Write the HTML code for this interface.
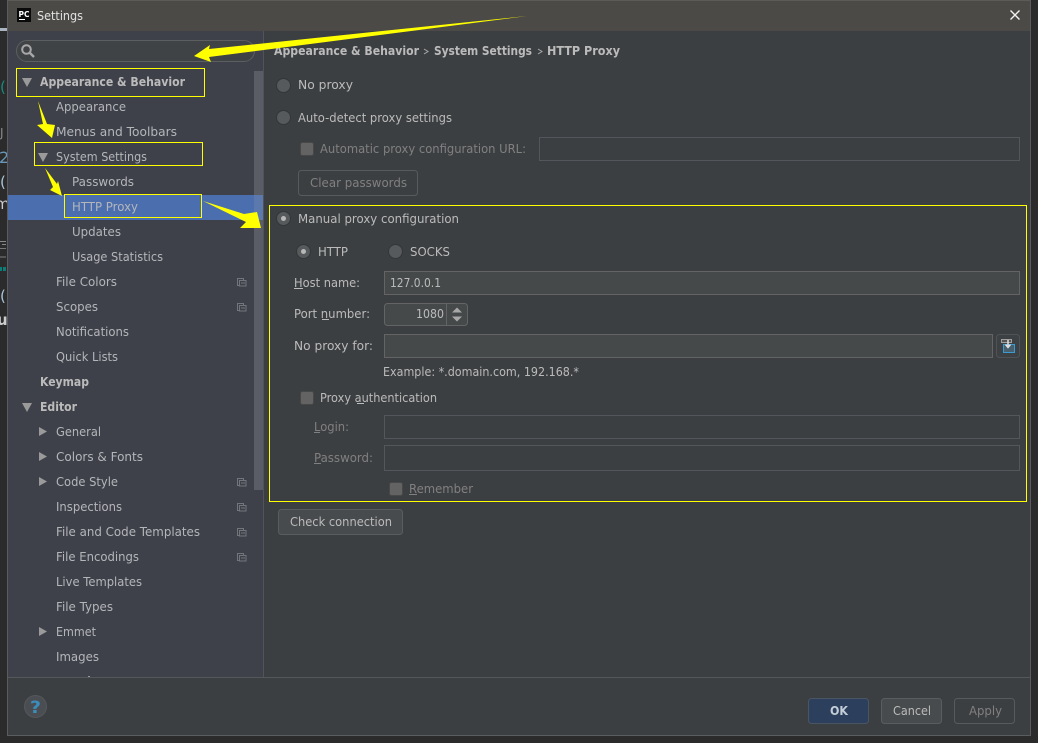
<!DOCTYPE html>
<html><head><meta charset="utf-8"><title>Settings</title>
<style>
html,body{margin:0;padding:0;background:#2b2b2b;width:1038px;height:743px;overflow:hidden}
svg{display:block}
text{font-family:"DejaVu Sans","Liberation Sans",sans-serif;font-size:12px;fill:#bbb}
.s{fill:#b4b6ba}
.b{font-weight:bold;fill:#bbb}
.d{fill:#808080}
.f{fill:#45494a;stroke:#646464}
.g{fill:#3c3f41;stroke:#53565a}
.c{fill:#636363;stroke:#484848}
.r{fill:#575a5c;stroke:#333538}
.y{fill:none;stroke:#ffff00}
.a{fill:#ffff00}
.t{fill:#9a9a9a}
.u{fill:#a8a8a8}
.i{fill:none;stroke:#72757b}
</style></head><body>
<svg width="1038" height="743" viewBox="0 0 1038 743" xmlns="http://www.w3.org/2000/svg">
<rect width="1038" height="743" fill="#2b2b2b"/>
<rect x="0" y="28" width="7" height="3" fill="#aab4c0"/>
<text x="0" y="92" style="font-size:15px;fill:#178a80">(</text>
<text x="0" y="137" style="font-size:12px;fill:#8a8a8a">J</text>
<text x="-1" y="163" style="font-size:16px;fill:#6897bb">2</text>
<text x="0" y="187" style="font-size:15px;fill:#a9c4dc">(</text>
<text x="-5" y="209" style="font-size:15px;fill:#ccc">m</text>
<rect x="0" y="241" width="6" height="1" fill="#888"/><rect x="2" y="244" width="4" height="1" fill="#888"/><rect x="0" y="248" width="6" height="1" fill="#777"/>
<rect x="0" y="256" width="6" height="2" fill="#555"/>
<rect x="0" y="267" width="2" height="4" fill="#0e7d78"/><rect x="3" y="267" width="3" height="4" fill="#0e7d78"/>
<text x="0" y="301" style="font-size:15px;fill:#a9c4dc">(</text>
<text x="-3" y="325" style="font-size:15px;font-weight:bold;fill:#ccc">u</text>

<!-- window -->
<rect x="7" y="0" width="1024" height="736" fill="#5a5c5e"/>
<rect x="8" y="1" width="1022" height="734" fill="#3c3f41"/>
<rect x="8" y="1" width="1022" height="30" fill="#4c4a46"/>
<rect x="8" y="0" width="1022" height="1" fill="#5c5b58"/>
<rect x="17" y="8" width="14" height="14" fill="#0a0a0a"/>
<text x="18.500" y="17" textLength="11" lengthAdjust="spacingAndGlyphs" style="font-size:7.500px;font-weight:bold;fill:#fff">PC</text>
<rect x="19" y="19" width="6" height="1" fill="#fff"/>
<text x="37" y="20" textLength="46" lengthAdjust="spacingAndGlyphs" style="fill:#e2e2e2">Settings</text>
<path d="M1010.500 10.500L1019.500 19.500M1019.500 10.500L1010.500 19.500" stroke="#f2f2f2" stroke-width="1.400" fill="none"/>

<!-- sidebar -->
<rect x="8" y="31" width="255" height="646" fill="#3e4149"/>
<rect x="263" y="31" width="1" height="646" fill="#515457"/>
<rect x="8" y="195" width="246" height="25" fill="#4b6eaf"/>
<rect x="254" y="71" width="9" height="419" fill="#5a5d65"/>
<rect x="254" y="195" width="9" height="25" fill="#5c79ad"/>
<rect x="16.500" y="40.500" width="238" height="21" rx="10.500" fill="#404346" stroke="#5c5e60"/>
<circle cx="26.500" cy="49.500" r="4.300" fill="none" stroke="#a8a8a8" stroke-width="2"/>
<path d="M30 53L34 57" stroke="#a8a8a8" stroke-width="2.400"/>

<path class="t" d="M22 78h10l-5 9z"/>
<text class="b" x="40" y="86" textLength="145" lengthAdjust="spacingAndGlyphs">Appearance &amp; Behavior</text>
<text class="s" x="56" y="111" textLength="70" lengthAdjust="spacingAndGlyphs">Appearance</text>
<text class="s" x="56" y="136" textLength="121" lengthAdjust="spacingAndGlyphs">Menus and Toolbars</text>
<path class="t" d="M38 153h10l-5 9z"/>
<text class="s" x="56" y="161" textLength="91" lengthAdjust="spacingAndGlyphs">System Settings</text>
<text class="s" x="72" y="186" textLength="62" lengthAdjust="spacingAndGlyphs">Passwords</text>
<text class="s" x="72" y="211" textLength="66" lengthAdjust="spacingAndGlyphs">HTTP Proxy</text>
<text class="s" x="72" y="236" textLength="49" lengthAdjust="spacingAndGlyphs">Updates</text>
<text class="s" x="72" y="261" textLength="91" lengthAdjust="spacingAndGlyphs">Usage Statistics</text>
<text class="s" x="56" y="286" textLength="61" lengthAdjust="spacingAndGlyphs">File Colors</text>
<text class="s" x="56" y="311" textLength="42" lengthAdjust="spacingAndGlyphs">Scopes</text>
<text class="s" x="56" y="336" textLength="73" lengthAdjust="spacingAndGlyphs">Notifications</text>
<text class="s" x="56" y="361" textLength="62" lengthAdjust="spacingAndGlyphs">Quick Lists</text>
<text class="b" x="40" y="386" textLength="49" lengthAdjust="spacingAndGlyphs">Keymap</text>
<path class="t" d="M22 403h10l-5 9z"/>
<text class="b" x="40" y="411" textLength="37" lengthAdjust="spacingAndGlyphs">Editor</text>
<path class="t" d="M39 427v9l8-4.500z"/>
<text class="s" x="56" y="436" textLength="45" lengthAdjust="spacingAndGlyphs">General</text>
<path class="t" d="M39 452v9l8-4.500z"/>
<text class="s" x="56" y="461" textLength="87" lengthAdjust="spacingAndGlyphs">Colors &amp; Fonts</text>
<path class="t" d="M39 477v9l8-4.500z"/>
<text class="s" x="56" y="486" textLength="62" lengthAdjust="spacingAndGlyphs">Code Style</text>
<text class="s" x="56" y="511" textLength="66" lengthAdjust="spacingAndGlyphs">Inspections</text>
<text class="s" x="56" y="536" textLength="144" lengthAdjust="spacingAndGlyphs">File and Code Templates</text>
<text class="s" x="56" y="561" textLength="83" lengthAdjust="spacingAndGlyphs">File Encodings</text>
<text class="s" x="56" y="586" textLength="86" lengthAdjust="spacingAndGlyphs">Live Templates</text>
<text class="s" x="56" y="611" textLength="57" lengthAdjust="spacingAndGlyphs">File Types</text>
<path class="t" d="M39 627v9l8-4.500z"/>
<text class="s" x="56" y="636" textLength="40" lengthAdjust="spacingAndGlyphs">Emmet</text>
<text class="s" x="56" y="661" textLength="43" lengthAdjust="spacingAndGlyphs">Images</text>
<rect x="88" y="676" width="2" height="1" fill="#9a9a9a"/>

<!-- copy icons -->
<g class="i"><path d="M240.500 285.500h-3v-7h6v2"/><rect x="239.500" y="280.500" width="6.500" height="5.500" fill="#3e4149"/><path d="M241 283h4"/></g>
<g class="i"><path d="M240.500 310.500h-3v-7h6v2"/><rect x="239.500" y="305.500" width="6.500" height="5.500" fill="#3e4149"/><path d="M241 308h4"/></g>
<g class="i"><path d="M240.500 485.500h-3v-7h6v2"/><rect x="239.500" y="480.500" width="6.500" height="5.500" fill="#3e4149"/><path d="M241 483h4"/></g>
<g class="i"><path d="M240.500 510.500h-3v-7h6v2"/><rect x="239.500" y="505.500" width="6.500" height="5.500" fill="#3e4149"/><path d="M241 508h4"/></g>
<g class="i"><path d="M240.500 535.500h-3v-7h6v2"/><rect x="239.500" y="530.500" width="6.500" height="5.500" fill="#3e4149"/><path d="M241 533h4"/></g>
<g class="i"><path d="M240.500 560.500h-3v-7h6v2"/><rect x="239.500" y="555.500" width="6.500" height="5.500" fill="#3e4149"/><path d="M241 558h4"/></g>

<!-- footer -->
<rect x="8" y="677" width="1022" height="1" fill="#55585a"/>
<circle cx="35.500" cy="706.500" r="11" fill="#4a4e52" stroke="#54585c"/>
<text x="30" y="713" textLength="11" lengthAdjust="spacingAndGlyphs" style="font-size:17px;font-weight:bold;fill:#3c8dbc">?</text>
<rect x="808.500" y="698.500" width="60" height="25" rx="3" fill="#2c405e" stroke="#4a5563"/>
<text x="830" y="715" textLength="18" lengthAdjust="spacingAndGlyphs" style="font-weight:bold;fill:#c5ced8">OK</text>
<rect x="881.500" y="698.500" width="60" height="25" rx="3" fill="#484b4d" stroke="#5a5d5f"/>
<text x="893" y="715" textLength="38" lengthAdjust="spacingAndGlyphs">Cancel</text>
<rect x="954.500" y="698.500" width="60" height="25" rx="3" fill="#3c3f41" stroke="#585b5d"/>
<text class="d" x="969" y="715" textLength="33" lengthAdjust="spacingAndGlyphs">Apply</text>

<!-- breadcrumb -->
<text class="b" x="274" y="55" textLength="145" lengthAdjust="spacingAndGlyphs">Appearance &amp; Behavior</text>
<path d="M424 49l4 2.500-4 2.500" fill="none" stroke="#aaa"/>
<text class="b" x="434" y="55" textLength="98" lengthAdjust="spacingAndGlyphs">System Settings</text>
<path d="M538 49l4 2.500-4 2.500" fill="none" stroke="#aaa"/>
<text class="b" x="547" y="55" textLength="73" lengthAdjust="spacingAndGlyphs">HTTP Proxy</text>

<!-- radios -->
<circle class="r" cx="283.500" cy="85.500" r="7"/>
<text x="298" y="89" textLength="55" lengthAdjust="spacingAndGlyphs">No proxy</text>
<circle class="r" cx="283.500" cy="117.500" r="7"/>
<text x="298" y="122" textLength="154" lengthAdjust="spacingAndGlyphs">Auto-detect proxy settings</text>
<rect class="c" x="300.500" y="142.500" width="13" height="13" rx="2"/>
<text class="d" x="320" y="153" textLength="206" lengthAdjust="spacingAndGlyphs">Automatic proxy configuration URL:</text>
<rect class="g" x="539.500" y="137.500" width="480" height="23"/>
<rect x="298.500" y="170.500" width="119" height="25" rx="3" fill="#3c3f41" stroke="#585b5d"/>
<text class="d" x="310" y="187" textLength="97" lengthAdjust="spacingAndGlyphs">Clear passwords</text>

<rect class="y" x="269.500" y="205.500" width="757" height="296"/>
<circle class="r" cx="283.500" cy="218.500" r="7"/><circle cx="283.500" cy="218.500" r="2.500" fill="#b8b8b8"/>
<text x="298" y="223" textLength="161" lengthAdjust="spacingAndGlyphs">Manual proxy configuration</text>
<circle class="r" cx="303.500" cy="251.500" r="7"/><circle cx="303.500" cy="251.500" r="2.500" fill="#b8b8b8"/>
<text x="318" y="256" textLength="30" lengthAdjust="spacingAndGlyphs">HTTP</text>
<circle class="r" cx="395.500" cy="251.500" r="7"/>
<text x="410" y="256" textLength="40" lengthAdjust="spacingAndGlyphs">SOCKS</text>

<text x="294" y="287" textLength="66" lengthAdjust="spacingAndGlyphs">Host name:</text>
<rect x="294" y="288" width="9" height="1" fill="#bbb"/>
<rect class="f" x="384.500" y="271.500" width="635" height="23"/>
<text x="390" y="287" textLength="51" lengthAdjust="spacingAndGlyphs">127.0.0.1</text>

<text x="294" y="318" textLength="76" lengthAdjust="spacingAndGlyphs">Port number:</text>
<rect x="322" y="319" width="7" height="1" fill="#bbb"/>
<rect class="f" x="384.500" y="303.500" width="83" height="22" rx="3"/>
<path d="M446.500 304v21" stroke="#646464"/>
<path class="u" d="M457 307.500l5 5h-10zM452 316.500h10l-5 5z"/>
<text x="416" y="318" textLength="28" lengthAdjust="spacingAndGlyphs">1080</text>

<text x="294" y="350" textLength="79" lengthAdjust="spacingAndGlyphs">No proxy for:</text>
<rect class="f" x="384.500" y="334.500" width="608" height="23"/>
<rect x="996.500" y="334.500" width="23" height="23" rx="3" fill="#3e4143" stroke="#505355"/>
<rect x="1001.500" y="339.500" width="10" height="3" fill="#555" stroke="#a0a0a0"/>
<rect x="1003.500" y="344.500" width="11" height="8" fill="#47606f" stroke="#3b9ad2"/>
<path d="M1008 340v7M1005.500 344.500l2.500 3 2.500-3" fill="none" stroke="#e0e0e0" stroke-width="1.500"/>
<text x="383" y="376" textLength="196" lengthAdjust="spacingAndGlyphs">Example: *.domain.com, 192.168.*</text>

<rect class="c" x="300.500" y="391.500" width="13" height="13" rx="2"/>
<text x="320" y="402" textLength="117" lengthAdjust="spacingAndGlyphs">Proxy authentication</text>
<rect x="357" y="403" width="7" height="1" fill="#bbb"/>
<text class="d" x="314" y="431" textLength="35" lengthAdjust="spacingAndGlyphs">Login:</text>
<rect x="314" y="432" width="6" height="1" fill="#808080"/>
<rect class="g" x="384.500" y="415.500" width="635" height="23"/>
<text class="d" x="314" y="462" textLength="59" lengthAdjust="spacingAndGlyphs">Password:</text>
<rect x="314" y="463" width="7" height="1" fill="#808080"/>
<rect class="g" x="384.500" y="445.500" width="635" height="25"/>
<rect class="c" x="389.500" y="482.500" width="13" height="13" rx="2"/>
<text class="d" x="409" y="493" textLength="64" lengthAdjust="spacingAndGlyphs">Remember</text>
<rect x="409" y="494" width="8" height="1" fill="#808080"/>

<rect x="278.500" y="509.500" width="124" height="25" rx="3" fill="#484b4d" stroke="#5a5d5f"/>
<text x="290" y="526" textLength="102" lengthAdjust="spacingAndGlyphs">Check connection</text>

<!-- annotations -->
<rect class="y" x="16.500" y="68.500" width="188" height="28"/>
<rect class="y" x="34.500" y="142.500" width="168" height="23"/>
<rect class="y" x="64.500" y="194.500" width="137" height="23"/>
<polygon class="a" points="527,16 209,49 210,45 194,56 211,62 209,57"/>
<polygon class="a" points="38,101 47,124 55,125 52,138 37,125 43,124"/>
<polygon class="a" points="45,168 57,184 58,181 62,196 50,190 53,187"/>
<polygon class="a" points="203,201 244,214 257,212 261,228 240,228 246,222"/>
</svg>
</body></html>
